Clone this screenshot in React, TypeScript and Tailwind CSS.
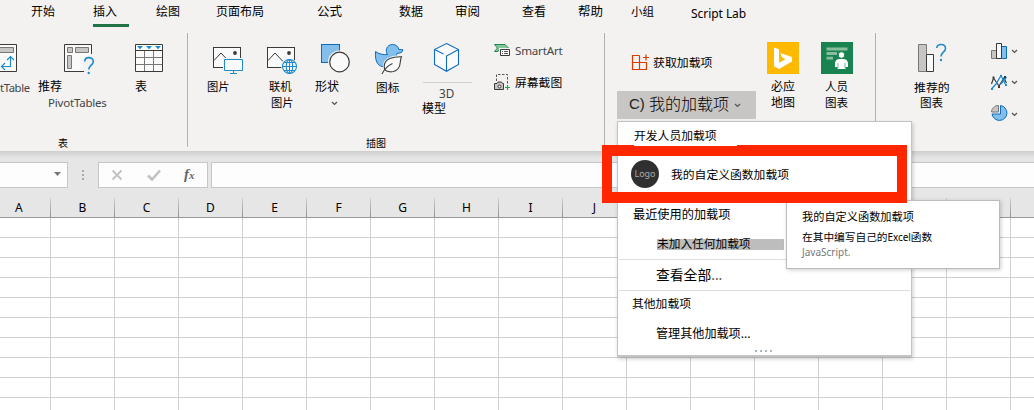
import type { ReactNode } from "react";

const tabs = [
  { label: "开始", cls: "w-[62px] pl-[31px]" },
  { label: "插入", cls: "w-[62px] pl-[31px]" },
  { label: "绘图", cls: "w-[62px] pl-[32px]" },
  { label: "页面布局", cls: "w-[100px] pl-[30px]" },
  { label: "公式", cls: "w-[82px] pl-[31px] text-[12.5px]" },
  { label: "数据", cls: "w-[57px] pl-[31px]" },
  { label: "审阅", cls: "w-[66px] pl-[30px] text-[12.5px]" },
  { label: "查看", cls: "w-[57px] pl-[31px]" },
  { label: "帮助", cls: "w-[54px] pl-[30px] text-[12.5px]" },
  { label: "小组", cls: "w-[59px] pl-[29px] text-[11.5px]" },
];

// Columns past J sit under the menu, so they carry no letter.
const columns = ["B", "C", "D", "E", "F", "G", "H", "I", "J", "", "", "", "", "", "", ""];
const rows = [1, 2, 3, 4, 5, 6, 7, 8, 9, 10];

function Icon({ box, className, children }: { box: string; className?: string; children: ReactNode }) {
  return (
    <svg viewBox={box} className={`shrink-0 ${className ?? ""}`} fill="none">
      {children}
    </svg>
  );
}

function Chevron({ className }: { className?: string }) {
  return (
    <svg viewBox="0 0 7 5" className={`h-[5px] w-[7px] shrink-0 ${className ?? ""}`} fill="none">
      <path d="M1 1l2.5 2.4L6 1" stroke="#555" strokeWidth="1.3" />
    </svg>
  );
}

function Divider() {
  return <div className="h-[114px] w-px shrink-0 bg-[#b3b0ad]" />;
}

function PictureFrame({ x }: { x: number }) {
  return (
    <g transform={`translate(${x} 0)`}>
      <rect x="0.5" y="47.5" width="27" height="20" fill="#fafafa" stroke="#3b3a39" />
      <path d="M1 60.500l7-7.500 8 8.500" stroke="#3b3a39" />
      <circle cx="22" cy="53" r="1.900" fill="#3b3a39" />
    </g>
  );
}

function Ribbon() {
  return (
    <div className="flex h-[118px] items-start">
      {/* Tables */}
      <div className="flex h-full w-[187px] shrink-0 flex-col">
        <div className="flex h-[102px]">
          <div className="flex w-[34px] flex-col items-start pt-[9px]">
            <Icon box="0 42 18 34" className="h-[34px] w-[18px]">
              <path d="M0 44.500H16.500V71.500H0" fill="#fafafa" stroke="#3b3a39" />
              <path d="M0 47.500H13.500V52.500H0" fill="#c8c6c4" stroke="#797775" />
              <path d="M10.500 56.500V66.500H2M7 60l3.500-3.500L14 60M5 63l-3.500 3.500L5 70" stroke="#1e8bcd" strokeWidth="1.200" />
            </Icon>
            <span className="mt-[4px] w-[30px] whitespace-nowrap text-[11.300px] leading-[16px] tracking-[-0.400px] text-[#444]">tTable</span>
          </div>
          <div className="flex w-[78px] flex-col items-start pt-[9px]">
            <Icon box="64 42 32 34" className="ml-[30px] h-[34px] w-[32px]">
              <path d="M91.500 54V44.500H64.500V71.500H84" fill="#fafafa" stroke="#3b3a39" />
              <path d="M84 71h-1.500v-12l9-5h2v18z" fill="#f3f2f1" />
              <path d="M67.500 47.500h5v5h-5zM75.500 47.500h13v5h-13zM67.500 55.500h4v13h-4z" fill="#c8c6c4" stroke="#797775" />
              <path d="M84.700 61.500c0-5 8.600-5.300 8.600 0 0 3.500-4.500 3.800-4.500 8" stroke="#1e8bcd" strokeWidth="1.600" />
              <circle cx="88.700" cy="73" r="1.200" fill="#1e8bcd" />
            </Icon>
            <span className="ml-[4px] mt-[3px] text-[12px] leading-[16px]">推荐</span>
            <span className="ml-[14px] text-[11.500px] leading-[16px] tracking-[-0.200px] text-[#444]">PivotTables</span>
          </div>
          <div className="flex w-[75px] flex-col items-start pt-[9px]">
            <Icon box="135 42 28 34" className="ml-[23px] h-[34px] w-[28px]">
              <rect x="135.500" y="44.500" width="27" height="27" fill="#fafafa" />
              <path d="M144.500 51v20M153.500 51v20M136 57.500h26M136 64.500h26" stroke="#797775" />
              <path d="M135.500 44.500h27v27h-27zM135.500 50.500h27" stroke="#3b3a39" />
              <path d="M137 46h6l-3 3.200zM146 46h6l-3 3.200zM155 46h6l-3 3.200z" fill="#1e8bcd" />
            </Icon>
            <span className="ml-[23px] mt-[3px] text-[12px] leading-[16px]">表</span>
          </div>
        </div>
        <span className="ml-[58px] text-[10px] leading-[16px]">表</span>
      </div>
      <Divider />
      {/* Illustrations */}
      <div className="flex h-full w-[416px] shrink-0 flex-col">
        <div className="flex h-[102px]">
          <div className="flex w-[72px] flex-col items-start pt-[9px]">
            <Icon box="213 42 31 34" className="ml-[25px] h-[34px] w-[31px]">
              <PictureFrame x={213} />
              <path d="M223 58h22v14h-22z" fill="#f3f2f1" />
              <path d="M224.500 59.500h18v11h-18zM233.500 70.500v3M230 73.500h7" fill="#fafafa" stroke="#1e8bcd" />
            </Icon>
            <span className="ml-[19px] mt-[3px] text-[11.300px] leading-[16px]">图片</span>
          </div>
          <div className="flex w-[50px] flex-col items-start pt-[9px]">
            <Icon box="267 42 31 34" className="ml-[7px] h-[34px] w-[31px]">
              <PictureFrame x={267} />
              <circle cx="289.500" cy="66.500" r="8.300" fill="#f3f2f1" />
              <g stroke="#1e8bcd" strokeWidth="1.100">
                <circle cx="289.500" cy="66.500" r="7" fill="#fafafa" />
                <ellipse cx="289.500" cy="66.500" rx="3.200" ry="7" />
                <path d="M282.500 66.500h14M284 62.500h11M284 70.500h11M289.500 59.500v14" />
              </g>
            </Icon>
            <span className="ml-[9px] mt-[3px] text-[11.300px] leading-[16px]">联机</span>
            <span className="ml-[11px] text-[11.300px] leading-[16px]">图片</span>
          </div>
          <div className="flex w-[54px] flex-col items-start pt-[9px]">
            <Icon box="320 42 32 34" className="ml-[10px] h-[34px] w-[32px]">
              <rect x="321.500" y="44.500" width="18" height="18" fill="#83beec" stroke="#0f6cbd" />
              <circle cx="339.500" cy="62" r="11.500" fill="#f3f2f1" />
              <circle cx="339.500" cy="62" r="9.800" fill="#fafafa" stroke="#3b3a39" strokeWidth="1.200" />
            </Icon>
            <span className="ml-[5px] mt-[3px] text-[12px] leading-[16px]">形状</span>
            <Chevron className="ml-[21px] mt-[6px]" />
          </div>
          <div className="flex w-[59px] flex-col items-start pt-[9px]">
            <Icon box="374 42 30 34" className="ml-[10px] h-[34px] w-[30px]">
              <path d="M375.500 51.500c3 2.500 8 3.500 12 3-2.500-3.500-1-10 5-10 4 0 6 2.500 6.200 5l4.300.300-1.500 2.700-4.500 1c-.500 2-1.700 3-1.200 5 .500 6-5 8.500-10 8.500-8 0-11-5-10.300-15.500z" fill="#83beec" stroke="#0f6cbd" />
              <path d="M402.500 56c-3-.200-19.500-.500-19 11.500l.500 2-3 4 5-1.500c10 3 17-2 15.500-10-.200-2.500.700-4 1-6z" fill="#f3f2f1" stroke="#f3f2f1" strokeWidth="1.500" />
              <path d="M401.500 56.800c-8-.200-17.300 1.700-17.300 9.700 0 7 10.300 6.500 14 2 3.200-3.500 1-7 3.300-11.700zM382 74c2.500-5.500 6-8.500 10.500-10.500" fill="#fafafa" stroke="#3b3a39" strokeWidth="1.100" />
            </Icon>
            <span className="ml-[12px] mt-[3px] text-[11.700px] leading-[16px]">图标</span>
          </div>
          <div className="flex w-[71px] flex-col items-start pt-[9px]">
            <Icon box="433 42 28 32" className="ml-[10px] h-[32px] w-[28px]">
              <path d="M446.500 43.500l12 6v15l-12 6.800-12-6.800v-15z" fill="#fafafa" stroke="#0f6cbd" strokeWidth="1.100" />
              <path d="M434.500 49.500l9 4.500M446.500 71V56l12-6.500" stroke="#0f6cbd" strokeWidth="1.100" />
            </Icon>
            <div className="mt-[8px] h-px w-[49px] bg-[#d2d0ce]" />
            <span className="ml-[16px] mt-[2px] text-[11.700px] leading-[16px] text-[#444]">3D</span>
            <span className="-ml-px text-[12px] leading-[16px]">模型</span>
          </div>
          <div className="flex flex-col pt-[10px]">
            <div className="flex h-[16px] items-center">
              <Icon box="494 44 17 16" className="h-[16px] w-[17px]">
                <path d="M494.500 45.500H505l4 4H500l-2 3h-3.500l3-3.500z" fill="#84c79a" stroke="#218649" />
                <path d="M499 49h12v9h-12z" fill="#f3f2f1" />
                <path d="M500.500 50.500h9v6h-9z" fill="#fff" stroke="#3b3a39" />
                <path d="M502 52.500h1M504 52.500h4M502 54.500h1M504 54.500h4" stroke="#555" />
              </Icon>
              <span className="ml-[4px] text-[11.600px] leading-[16px] tracking-[-0.200px] text-[#444]">SmartArt</span>
            </div>
            <div className="mt-[15px] flex h-[17px] items-center">
              <Icon box="494 75 17 17" className="h-[17px] w-[17px]">
                <path d="M496.500 82v-6.500h11v9" stroke="#555" strokeDasharray="2.500 1.500" />
                <path d="M494.500 84.500h2.500l1-1.500h3.500l1 1.500h1v6h-9z" fill="#c8c6c4" stroke="#3b3a39" />
                <circle cx="499.500" cy="87.500" r="1.500" fill="#fff" stroke="#3b3a39" />
                <path d="M505 88.500h5M507.500 86v5" stroke="#21a651" strokeWidth="1.200" />
              </Icon>
              <span className="ml-[4px] pb-[2px] text-[11.800px] leading-[16px]">屏幕截图</span>
            </div>
          </div>
        </div>
        <span className="ml-[178px] text-[10px] leading-[16px]">插图</span>
      </div>
      <Divider />
      {/* Add-ins */}
      <div className="flex w-[270px] shrink-0 pl-[12px]">
        <div className="flex w-[139px] flex-col">
          <div className="mt-[20px] flex h-[18px] items-center pl-[14px]">
            <Icon box="631 54 18 17" className="h-[17px] w-[18px]">
              <path d="M639.500 55.500h-7v14h14v-7h-14M639.500 55.500v14M646 54.500v6M643 57.500h6" stroke="#d83b01" strokeWidth="1.200" />
            </Icon>
            <span className="ml-[4px] text-[11.900px] leading-[16px]">获取加载项</span>
          </div>
          <div className="mt-[20px] flex h-[28px] items-center bg-[#c8c6c4] pl-[12px]">
            <span className="w-[20px] pb-[2px] font-['Liberation_Sans',sans-serif] text-[15px] leading-[20px] text-[#222]">C)</span>
            <span className="w-[80px] pb-[2px] text-[16px] font-light leading-[20px]">我的加载项</span>
            <Chevron className="ml-[5px]" />
          </div>
        </div>
        <div className="ml-[11px] flex w-[32px] flex-col pt-[9px]">
          <Icon box="0 0 32 32" className="h-[32px] w-[32px]">
            <path d="M0 0h32v32H0z" fill="#ffb900" />
            <path d="M7 5.500l5 1.700v13.500l6.500-3.500-3.300-1.700-2-4.500 11.800 4v4.500L12 27l-5-2.800z" fill="#fff" />
          </Icon>
          <span className="ml-[4px] mt-[5px] text-[12px] leading-[16px]">必应</span>
          <span className="ml-[4px] text-[12px] leading-[16px]">地图</span>
        </div>
        <div className="ml-[22px] flex w-[32px] flex-col pt-[9px]">
          <Icon box="0 0 32 32" className="h-[32px] w-[32px]">
            <path d="M0 0h32v32H0z" fill="#188351" />
            <path d="M5.500 5.500h21v3h-21zM5.500 10h10.500v3H5.500zM5.500 14.700h6.500v2.800H5.500z" fill="#88bd9f" />
            <circle cx="20.500" cy="13" r="3.300" fill="#fff" stroke="#188351" />
            <path d="M14 25v-3c0-3.500 1.700-5 5-5h3c3.300 0 5 1.500 5 5v3h-2.500v2h-8v-2z" fill="#fff" />
            <path d="M17 21v5M24 21v5" stroke="#188351" strokeWidth=".6" />
          </Icon>
          <span className="ml-[4px] mt-[5px] text-[11.500px] leading-[16px]">人员</span>
          <span className="ml-[4px] text-[11.500px] leading-[16px]">图表</span>
        </div>
      </div>
      <Divider />
      {/* Charts */}
      <div className="flex flex-1">
        <div className="flex w-[115px] flex-col items-start pt-[9px]">
          <Icon box="917 42 31 34" className="ml-[41px] h-[34px] w-[31px]">
            <path d="M918.500 44.500h8v27h-8z" fill="#c8c6c4" stroke="#797775" />
            <path d="M926.500 54.500h7v17h-7z" fill="#fafafa" stroke="#3b3a39" />
            <path d="M936.700 48c0-4.800 8.800-4.800 8.800.500 0 3.500-4.500 4-4.500 8" stroke="#1e8bcd" strokeWidth="1.600" />
            <circle cx="941" cy="60" r="1.200" fill="#1e8bcd" />
          </Icon>
          <span className="ml-[38px] mt-[3px] text-[11.900px] leading-[16px]">推荐的</span>
          <span className="ml-[44px] text-[11.500px] leading-[16px]">图表</span>
        </div>
        <div className="flex flex-col gap-[14px] pt-[9px]">
          <div className="flex items-center">
            <Icon box="991 42 16 18" className="h-[18px] w-[16px]">
              <path d="M991.500 50.500h5v8h-5z" fill="#c8c6c4" stroke="#797775" />
              <path d="M1001.500 46.500h5v12h-5z" fill="#83beec" stroke="#0f6cbd" />
              <path d="M996.500 43.500h5v15h-5z" fill="#fafafa" stroke="#3b3a39" />
            </Icon>
            <Chevron className="ml-[4px]" />
          </div>
          <div className="flex items-center">
            <Icon box="991 73 16 17" className="h-[17px] w-[16px]">
              <path d="M991.500 83l2-6 5.500 8 5-8 2.500 5" stroke="#3b3a39" strokeWidth="1.200" />
              <path d="M991.500 88l4.500-5 5-8.500 5 10M1001 83l5.500-7" stroke="#1e8bcd" strokeWidth="1.300" />
              <path d="M992.500 75.500h2v2h-2zM998 85h2v2h-2zM1004 75h2v2h-2z" fill="#3b3a39" />
              <path d="M991 87h2v2h-2zM1000 74h2v2h-2zM1005 83h2v2h-2z" fill="#1e8bcd" />
            </Icon>
            <Chevron className="ml-[4px]" />
          </div>
          <div className="flex items-center">
            <Icon box="991 105 17 18" className="h-[18px] w-[17px]">
              <path d="M1000.500 105.500a7.500 7.500 0 1 1-8.500 8.500h8.500z" fill="#83beec" stroke="#0f6cbd" />
              <path d="M998.500 105.500v6.500h-7c0-3.500 3-6.500 7-6.500z" fill="#c8c6c4" stroke="#797775" />
            </Icon>
            <Chevron className="ml-[3px]" />
          </div>
        </div>
      </div>
    </div>
  );
}

function FormulaBar() {
  return (
    <div className="flex h-[37px] items-start pt-[11px]">
      <div className="flex h-[26px] w-[68px] items-center justify-end border border-l-0 border-[#c6c6c6] bg-[#fdfdfd] pr-[6px]">
        <svg viewBox="0 0 7 4" className="mb-[2px] h-[4px] w-[7px]"><path d="M0 0h7L3.500 4z" fill="#777" /></svg>
      </div>
      <div className="ml-[14px] mt-[8px] flex flex-col gap-[2px]">
        <div className="h-[2px] w-[2px] bg-[#aaa]" />
        <div className="h-[2px] w-[2px] bg-[#aaa]" />
        <div className="h-[2px] w-[2px] bg-[#aaa]" />
      </div>
      <div className="ml-[14px] flex h-[26px] w-[110px] items-center border border-[#c6c6c6] bg-[#fdfdfd] pl-[12px]">
        <svg viewBox="0 0 12 12" className="h-[12px] w-[12px]" fill="none"><path d="M1.500 1.500l9 9M10.500 1.500l-9 9" stroke="#c2c2c2" strokeWidth="1.900" /></svg>
        <svg viewBox="0 0 14 12" className="ml-[24px] h-[12px] w-[14px]" fill="none"><path d="M1 6.500l4 4 8-9" stroke="#c2c2c2" strokeWidth="2.600" /></svg>
        <span className="ml-[23px] pb-[2px] font-['Liberation_Serif',serif] text-[15px] font-bold italic leading-[18px] text-[#666]">
          f<span className="text-[11px]">x</span>
        </span>
      </div>
      <div className="ml-[3px] h-[26px] flex-1 border border-r-0 border-[#c6c6c6] bg-[#fdfdfd]" />
    </div>
  );
}

function HeaderRule() {
  return <div className="h-[19px] w-px shrink-0 bg-linear-to-b from-[#cfcfcf] to-[#939393]" />;
}

function Sheet() {
  return (
    <div>
      <div className="flex h-[30px] w-[1100px] items-end border-b border-[#999] text-[12px] leading-[20px]">
        <div className="h-[19px] w-[50px] shrink-0 pl-[15px]">A</div>
        <HeaderRule />
        {columns.map((c, i) => (
          <div key={i} className="flex h-[19px] w-[64px] shrink-0">
            <div className="w-[63px] text-center">{c}</div>
            <HeaderRule />
          </div>
        ))}
      </div>
      {rows.map((r) => (
        <div key={r} className="flex h-[20px] w-[1100px] border-b border-[#d0d0d0] bg-white">
          <div className="w-[51px] shrink-0 border-r border-[#d0d0d0]" />
          {columns.map((_, i) => (
            <div key={i} className="w-[64px] shrink-0 border-r border-[#d0d0d0]" />
          ))}
        </div>
      ))}
    </div>
  );
}

function AddInsMenu() {
  return (
    <div className="absolute left-[617px] top-[121px] flex h-[236px] w-[295px] flex-col border border-b-2 border-[#c3c3c3] bg-white shadow-[1px_2px_4px_rgba(0,0,0,0.2)]">
      <span className="ml-[16px] mt-[5px] text-[11.800px] leading-[16px]">开发人员加载项</span>
      <div className="mt-[17px] flex h-[28px] items-center pl-[13px]">
        <div className="flex h-[28px] w-[28px] items-center justify-center rounded-full bg-[#303030] text-[9px] text-[#aaa]">Logo</div>
        <span className="ml-[12px] pb-[1px] text-[11.800px] leading-[16px]">我的自定义函数加载项</span>
      </div>
      <span className="ml-[15px] mt-[19px] text-[12.200px] leading-[16px]">最近使用的加载项</span>
      <div className="ml-[39px] mt-[16px] flex h-[11px] w-[127px] items-center bg-[#bdbdbd]">
        <span className="pb-[4px] text-[11.700px] leading-[16px]">未加入任何加载项</span>
      </div>
      <div className="mx-px mt-[9px] h-px shrink-0 bg-[#dedede]" />
      <span className="ml-[38px] mt-[6px] text-[13.800px] leading-[18px]">查看全部<span className="text-[#555]">...</span></span>
      <div className="mx-px mt-[6px] h-px shrink-0 bg-[#dedede]" />
      <span className="ml-[14px] mt-[4px] text-[11.800px] leading-[16px]">其他加载项</span>
      <span className="ml-[38px] mt-[15px] text-[12.100px] leading-[16px]">管理其他加载项...</span>
      <div className="mt-[8px] flex justify-center gap-[3px] pr-[2px]">
        <div className="h-[2px] w-[2px] bg-[#aeb6be]" />
        <div className="h-[2px] w-[2px] bg-[#aeb6be]" />
        <div className="h-[2px] w-[2px] bg-[#aeb6be]" />
        <div className="h-[2px] w-[2px] bg-[#aeb6be]" />
      </div>
    </div>
  );
}

export default function App() {
  return (
    <div className="relative h-[410px] w-[1034px] overflow-hidden bg-[#e6e6e6] font-['Noto_Sans','Noto_Sans_CJK_SC',sans-serif] text-black">
      <div className="h-[151px] bg-[#f3f2f1]">
        <div className="flex h-[33px] text-[12px] leading-[16px]">
          {tabs.map((t) => (
            <div key={t.label} className={`shrink-0 whitespace-nowrap pt-[4px] ${t.cls}`}>
              {t.label}
              {t.label === "插入" && <div className="mt-[4px] h-[3px] w-[36px] bg-[#217346]" />}
            </div>
          ))}
          <div className="ml-[30px] whitespace-nowrap pt-[6px] text-[12px] tracking-[-0.050px]">Script Lab</div>
        </div>
        <Ribbon />
      </div>
      <div className="-mb-[7px] h-[7px] bg-linear-to-b from-[#cdcdcd] to-[#e6e6e6]" />
      <FormulaBar />
      <Sheet />
      <AddInsMenu />
      <div className="absolute left-[786px] top-[200px] flex h-[69px] w-[214px] flex-col border border-[#bcbcbc] bg-white pl-[15px] pt-[8px] shadow-[1px_1px_4px_rgba(0,0,0,0.2)]">
        <span className="text-[11.200px] leading-[16px]">我的自定义函数加载项</span>
        <span className="mt-[4px] whitespace-nowrap text-[10.700px] leading-[16px]">
          在其中编写自己的<span className="text-[10px] tracking-[-0.100px]">Excel</span>函数
        </span>
        <span className="text-[10px] leading-[15px] text-[#777]">JavaScript.</span>
      </div>
      <div className="absolute left-[602px] top-[145px] h-[58px] w-[305px] border-x-[10px] border-y-[11px] border-[#ff2600]" />
      <div className="absolute left-[634px] top-[144px] h-[2px] w-[103px] bg-white" />
    </div>
  );
}
